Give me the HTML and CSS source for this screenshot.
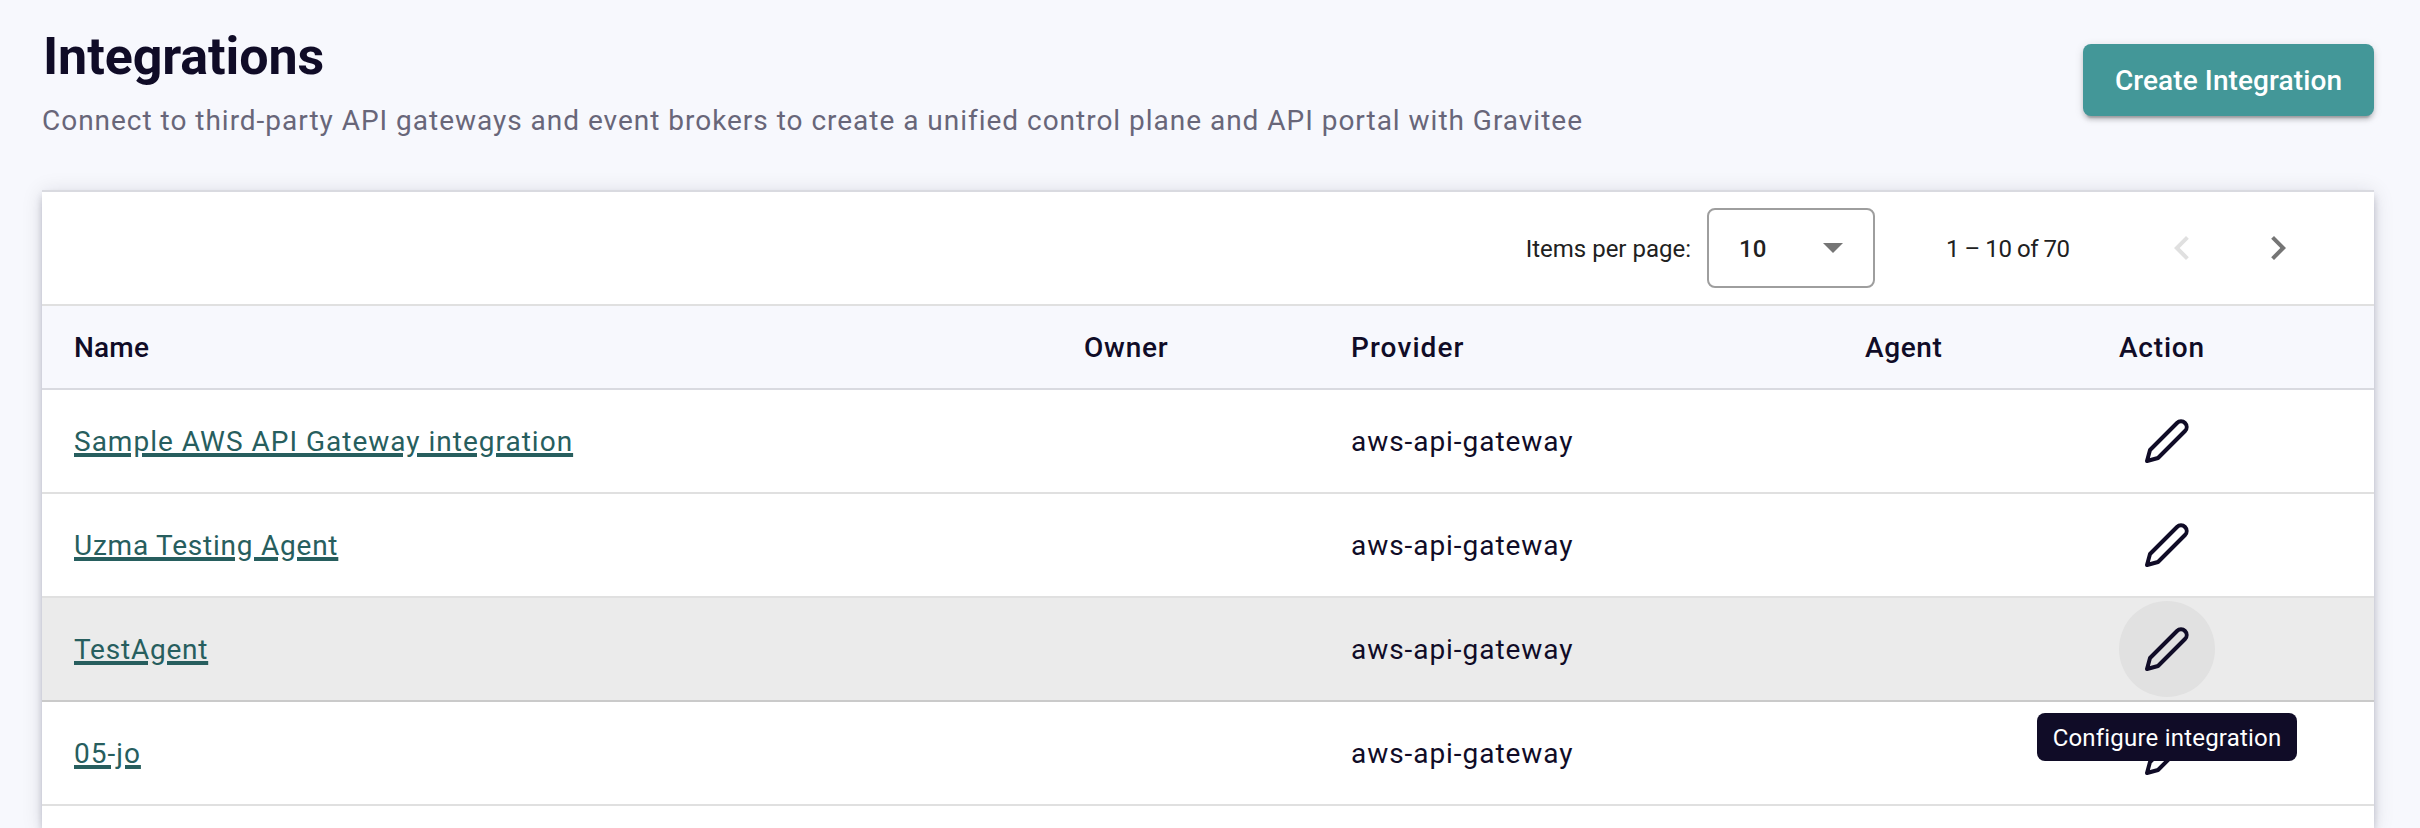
FILE: index.html
```
<!DOCTYPE html>
<html lang="en">
<head>
<meta charset="utf-8">
<title>Integrations</title>
<link rel="stylesheet" href="styles.css">
</head>
<body>
<svg class="sprite" aria-hidden="true">
  <symbol id="pencil" viewBox="0 0 24 24"><path d="M17 3a2.828 2.828 0 1 1 4 4L7.5 20.5 2 22l1.5-5.5L17 3z" fill="none" stroke="currentColor" stroke-width="2" stroke-linejoin="round" stroke-linecap="round"/></symbol>
</svg>
<header class="page-header">
  <div>
    <h1 class="title">Integrations</h1>
    <p class="subtitle">Connect to third-party API gateways and event brokers to create a unified control plane and API portal with Gravitee</p>
  </div>
  <button class="create">Create Integration</button>
</header>
<main class="card">
  <div class="paginator">
    <span class="per-page">Items per page:</span>
    <div class="select"><span>10</span><svg class="arrow" viewBox="0 0 20 10"><path d="M0 0h20L10 10z"/></svg></div>
    <span class="range">1 – 10 of 70</span>
    <svg class="chevron disabled" viewBox="0 0 24 24"><path d="M15.41 7.41L14 6l-6 6 6 6 1.41-1.41L10.83 12z"/></svg>
    <svg class="chevron" viewBox="0 0 24 24"><path d="M10 6L8.59 7.41 13.17 12l-4.58 4.59L10 18l6-6z"/></svg>
  </div>
  <div class="row head">
    <span class="h-name">Name</span><span class="h-owner">Owner</span><span class="h-provider">Provider</span><span class="h-agent">Agent</span><span class="h-action">Action</span>
  </div>
  <div class="row">
    <a class="link">Sample AWS API Gateway integration</a><span></span><span class="provider">aws-api-gateway</span><span></span>
    <span class="action"><svg class="pencil"><use href="#pencil"/></svg></span>
  </div>
  <div class="row">
    <a class="link tight">Uzma Testing Agent</a><span></span><span class="provider">aws-api-gateway</span><span></span>
    <span class="action"><svg class="pencil"><use href="#pencil"/></svg></span>
  </div>
  <div class="row hovered">
    <a class="link tight">TestAgent</a><span></span><span class="provider">aws-api-gateway</span><span></span>
    <span class="action"><svg class="pencil"><use href="#pencil"/></svg><span class="tooltip">Configure integration</span></span>
  </div>
  <div class="row">
    <a class="link">05-jo</a><span></span><span class="provider">aws-api-gateway</span><span></span>
    <span class="action"><svg class="pencil"><use href="#pencil"/></svg></span>
  </div>
</main>
</body>
</html>
```
FILE: styles.css
```
* { box-sizing: border-box; }
body {
  margin: 0;
  height: 828px;
  overflow: hidden;
  padding: 0 46px 0 42px;
  display: flex;
  flex-direction: column;
  background: #f7f8fd;
  color: #100c27;
  font: 400 28px/40px Roboto, "Liberation Sans", sans-serif;
}
.sprite { display: none; }
.page-header {
  flex: none;
  height: 190px;
  padding-top: 24px;
  display: flex;
  justify-content: space-between;
  align-items: flex-start;
}
.title { margin: 0 0 12px; padding: 1px 0 0 1px; font-size: 52px; line-height: 64px; font-weight: 700; letter-spacing: -0.1px; }
.subtitle { margin: 0; color: #686679; letter-spacing: 0.98px; white-space: nowrap; }
.create {
  width: 291px;
  height: 72px;
  margin-top: 20px;
  padding: 2px 0 0;
  border: 0;
  border-radius: 8px;
  background: #439798;
  color: #fff;
  font: 500 28px/40px Roboto, "Liberation Sans", sans-serif;
  letter-spacing: 0.1px;
  box-shadow: 0 6px 2px -4px rgba(0,0,0,.2), 0 4px 4px rgba(0,0,0,.14), 0 2px 10px rgba(0,0,0,.12);
}
.card {
  flex: 1 0 auto;
  border-top: 2px solid #d9dae0;
  background: #fff;
  box-shadow: 0 4px 8px -2px rgba(16,12,39,.2), 0 8px 10px rgba(16,12,39,.08), 0 2px 20px rgba(16,12,39,.12);
}
.paginator {
  height: 114px;
  padding-right: 72px;
  border-bottom: 2px solid #e0e0e0;
  display: flex;
  align-items: center;
  justify-content: flex-end;
  font-size: 24px;
  color: #212121;
}
.per-page { padding-top: 2px; }
.select {
  width: 168px;
  height: 80px;
  margin: 0 71px 0 16px;
  padding: 0 30px;
  border: 2px solid #9e9e9e;
  border-radius: 8px;
  display: flex;
  align-items: center;
  justify-content: space-between;
  font-weight: 500;
}
.select span { padding-top: 2px; }
.arrow { width: 20px; height: 10px; fill: #757575; }
.range { width: 124px; margin-right: 88px; padding-top: 2px; letter-spacing: -0.45px; white-space: nowrap; }
.chevron { width: 48px; height: 48px; fill: #757575; }
.chevron.disabled { margin-right: 48px; fill: #e0e0e0; }
.row {
  height: 104px;
  padding-left: 32px;
  border-bottom: 2px solid #e0e0e0;
  display: grid;
  grid-template-columns: 1010px 267px 514px 254px 1fr;
  align-items: center;
}
.row.head { height: 84px; padding-top: 2px; background: #f7f8fd; border-color: #d9dae0; font-weight: 500; }
.h-name { letter-spacing: 0.2px; }
.h-owner { letter-spacing: 0.8px; }
.h-provider { letter-spacing: 1.1px; }
.h-agent { letter-spacing: 0.6px; }
.h-action { letter-spacing: 0.8px; }
.link {
  justify-self: start;
  padding-top: 2px;
  color: #275e5e;
  letter-spacing: 1px;
  text-decoration: underline;
  text-decoration-thickness: 4px;
  text-underline-offset: 2px;
}
.link.tight { letter-spacing: 0.77px; }
.provider { padding-top: 2px; letter-spacing: 0.95px; }
.action {
  position: relative;
  width: 96px;
  height: 96px;
  border-radius: 50%;
  display: flex;
  align-items: center;
  justify-content: center;
}
.pencil { width: 48px; height: 48px; }
.hovered { background: #ebebeb; border-color: #cacaca; }
.hovered .action { background: #e1e1e1; }
.tooltip {
  position: absolute;
  z-index: 1;
  top: 112px;
  left: -82px;
  width: 260px;
  height: 48px;
  padding-top: 1px;
  border-radius: 8px;
  background: #100c27;
  color: #fff;
  font-size: 24px;
  line-height: 48px;
  letter-spacing: 0.2px;
  text-align: center;
  white-space: nowrap;
}
```
